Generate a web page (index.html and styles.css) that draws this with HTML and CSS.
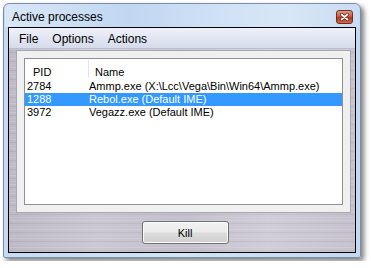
FILE: index.html
```html
<!DOCTYPE html>
<html lang="en">
  <head>
    <meta charset="UTF-8" />
    <meta name="viewport" content="width=device-width, initial-scale=1.0" />
    <title>Active processes</title>
    <link rel="stylesheet" href="styles.css">
  </head>
  <body>
    <div class="window">
      <div class="titlebar">
        <span class="title">Active processes</span>
        <button class="close">
          <svg width="9" height="8" viewBox="0 0 9 8">
            <path d="M1.5 1.5 L7.5 6.5 M7.5 1.5 L1.5 6.5" stroke="#6b2417" stroke-width="3.4" stroke-linecap="round" />
            <path d="M1.5 1.5 L7.5 6.5 M7.5 1.5 L1.5 6.5" stroke="#fff" stroke-width="1.8" stroke-linecap="round" />
          </svg>
        </button>
      </div>
      <div class="client">
        <div class="menubar">
          <span class="menu-item">File</span>
          <span class="menu-item">Options</span>
          <span class="menu-item">Actions</span>
        </div>
        <div class="metal">
          <div class="group">
            <div class="list">
              <div class="list-head">
                <div class="head-pid">PID</div>
                <div class="head-name">Name</div>
              </div>
              <div class="row">
                <span class="pid">2784</span>
                <span class="name">Ammp.exe (X:\Lcc\Vega\Bin\Win64\Ammp.exe)</span>
              </div>
              <div class="row selected">
                <span class="pid">1288</span>
                <span class="name">Rebol.exe (Default IME)</span>
              </div>
              <div class="row">
                <span class="pid">3972</span>
                <span class="name">Vegazz.exe (Default IME)</span>
              </div>
            </div>
          </div>
          <div class="actions">
            <button class="btn">Kill</button>
          </div>
        </div>
      </div>
    </div>
  </body>
</html>
```

FILE: styles.css
```css
* {
  margin: 0;
  padding: 0;
  box-sizing: border-box;
}

body {
  font-family: "Liberation Sans", Arial, sans-serif;
  background-color: #fff;
  padding: 3px;
}

.window {
  width: 358px;
  height: 255px;
  border: 1px solid #7b8ea8;
  border-radius: 6px 6px 2px 2px;
  background: linear-gradient(to right, #c6dbf3, #d2e3f6 50%, #c3d8f1);
  box-shadow: 3px 3px 5px rgba(0, 0, 0, 0.5);
  padding: 0 4px 4px 4px;
  display: flex;
  flex-direction: column;
}

.titlebar {
  height: 23px;
  display: flex;
  align-items: center;
  justify-content: space-between;
  background: linear-gradient(to right, #d9e7f7, #c0d7f1 35%, #cfe1f5 60%, #d8e7f7 80%, #c8dcf3);
  margin: 0 -3px;
  padding-left: 7px;
  padding-right: 6px;
  border-radius: 5px 5px 0 0;
}

.title {
  font-size: 12px;
  color: #000;
  padding-top: 2px;
}

.close {
  width: 17px;
  height: 14px;
  margin-top: 2px;
  border: 1px solid #6e2c22;
  border-radius: 3px;
  background: linear-gradient(to bottom, #e39a84, #d0573c 45%, #b8341c 55%, #cf6a48);
  display: flex;
  align-items: center;
  justify-content: center;
}

.client {
  flex: 1;
  border: 1px solid #000;
  display: flex;
  flex-direction: column;
  background-color: #c9c5d1;
}

.menubar {
  height: 21px;
  display: flex;
  align-items: center;
  padding-left: 3px;
  background: linear-gradient(to bottom, #eef1f9, #e0e4f1 60%, #d6dbeb);
  border-bottom: 1px solid #b9bfd2;
}

.menu-item {
  font-size: 12px;
  padding: 0 7px;
  padding-top: 1px;
}

.metal {
  flex: 1;
  padding: 1px 4px 8px 7px;
  display: flex;
  flex-direction: column;
  background:
    repeating-linear-gradient(to bottom, rgba(255, 255, 255, 0.14) 0 1px, transparent 1px 3px, rgba(0, 0, 0, 0.05) 3px 4px, transparent 4px 6px, rgba(255, 255, 255, 0.08) 6px 7px, transparent 7px 9px),
    linear-gradient(to right, #bdb9c6, #cbc7d3 25%, #c3bfcc 50%, #d0ccd8 75%, #c5c1ce);
}

.group {
  height: 163px;
  border: 1px solid #a9a6b0;
  background-color: #f0f0f0;
  padding: 7px;
}

.list {
  height: 100%;
  border: 1px solid #8e8f94;
  background-color: #fff;
  font-size: 11px;
}

.list-head {
  height: 21px;
  display: flex;
  align-items: flex-end;
  padding-bottom: 2px;
}

.head-pid {
  width: 63px;
  padding-left: 8px;
}

.head-name {
  height: 18px;
  border-left: 1px solid #e3e3e3;
  padding-left: 6px;
  display: flex;
  align-items: flex-end;
}

.row {
  height: 13px;
  line-height: 13px;
  display: flex;
}

.row.selected {
  background-color: #3399ff;
  color: #fff;
}

.pid {
  width: 63px;
  padding-left: 2px;
}

.name {
  padding-left: 1px;
  white-space: nowrap;
}

.actions {
  flex: 1;
  display: flex;
  justify-content: center;
  align-items: flex-end;
}

.btn {
  width: 87px;
  height: 23px;
  font-family: "Liberation Sans", Arial, sans-serif;
  font-size: 11px;
  color: #000;
  border: 1px solid #707070;
  border-radius: 3px;
  background: linear-gradient(to bottom, #f2f2f2, #ebebeb 48%, #dddddd 52%, #cfcfcf);
  box-shadow: inset 0 0 0 1px #fcfcfc;
  margin-left: 3px;
}
```
